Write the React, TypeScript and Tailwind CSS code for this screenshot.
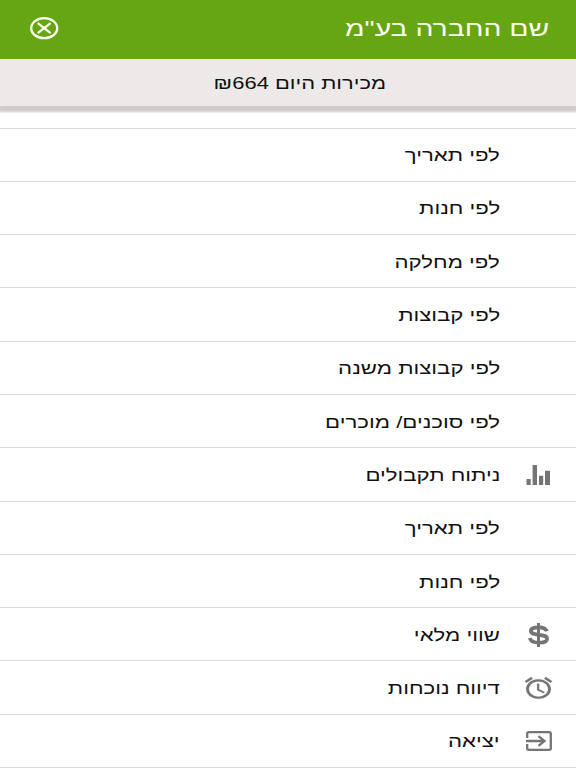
import type { ReactNode } from "react";

interface MenuItem {
  id: string;
  label: string;
  icon?: ReactNode;
}

const MENU_ITEMS: MenuItem[] = [
  { id: "date", label: "לפי תאריך" },
  { id: "store", label: "לפי חנות" },
  { id: "department", label: "לפי מחלקה" },
  { id: "groups", label: "לפי קבוצות" },
  { id: "subgroups", label: "לפי קבוצות משנה" },
  { id: "agents", label: "לפי סוכנים/ מוכרים" },
  { id: "receipts", label: "ניתוח תקבולים", icon: <BarsIcon /> },
  { id: "receipts-date", label: "לפי תאריך" },
  { id: "receipts-store", label: "לפי חנות" },
  { id: "stock", label: "שווי מלאי", icon: <DollarIcon /> },
  { id: "attendance", label: "דיווח נוכחות", icon: <AlarmIcon /> },
  { id: "exit", label: "יציאה", icon: <ExitIcon /> },
];

export default function App() {
  return (
    <div
      dir="rtl"
      className="flex h-screen w-full flex-col overflow-hidden bg-white font-['Liberation_Sans',sans-serif] text-[#111111]"
    >
      {/* Header */}
      <header className="flex h-[59px] shrink-0 items-center justify-between bg-[#65a612] pr-[27px] pb-px pl-[30px] text-[#fcfff0]">
        <h1 className="origin-right scale-x-[1.29] text-[22px] leading-[30px] whitespace-nowrap">
          שם החברה בע"מ
        </h1>
        <button aria-label="סגירה">
          <CloseIcon />
        </button>
      </header>

      {/* Today's sales */}
      <div className="flex h-[47px] shrink-0 items-center justify-center bg-[#ece9e8] pt-[3px] pl-6 shadow-[0_5px_2px_1px_#cecbca]">
        <p className="scale-x-[1.29] text-[17px] leading-6 whitespace-nowrap">
          מכירות היום ₪664
        </p>
      </div>

      {/* Menu */}
      <ul className="mt-[21.5px] border-t border-[#dcdcdc]">
        {MENU_ITEMS.map((item) => (
          <MenuRow key={item.id} item={item} />
        ))}
      </ul>
    </div>
  );
}

function MenuRow({ item }: { item: MenuItem }) {
  return (
    <li className="flex h-[53.3px] items-center border-b border-[#dcdcdc] pt-px pr-[23px]">
      <span className="flex w-[29px] shrink-0 justify-center text-[#757575]">
        {item.icon}
      </span>
      <span className="mr-6 origin-right scale-x-[1.305] pt-0.5 text-[17px] leading-6 whitespace-nowrap">
        {item.label}
      </span>
    </li>
  );
}

function CloseIcon() {
  return (
    <svg
      className="mb-px h-[23px] w-[29px]"
      viewBox="0 0 29 23"
      fill="none"
      stroke="currentColor"
      strokeWidth="2.3"
    >
      <ellipse cx="14.2" cy="11.2" rx="13" ry="10" />
      <path d="M7.8 6.2l12.8 10M20.6 6.2l-12.8 10" />
    </svg>
  );
}

function BarsIcon() {
  return (
    <svg
      className="h-5 w-[25px] shrink-0"
      viewBox="0 0 25 20"
      fill="currentColor"
    >
      <path d="M.5 14h4.2v6H.5zM6.6 0h4.4v20H6.6zM13 10.8h4.2V20H13zM19 5.7h5V20h-5z" />
    </svg>
  );
}

function DollarIcon() {
  return (
    <svg
      className="h-6 w-6 shrink-0"
      viewBox="0 0 24 24"
      fill="none"
      stroke="currentColor"
    >
      <path
        strokeWidth="3.8"
        d="M19.8 8.2C19 5.6 16 4.300 11.500 4.300c-4.600 0-7.600 1.400-7.600 3.700 0 5.500 16.200 2 16.200 7.700 0 2.700-3.600 4-8.300 4-5 0-8.300-1.500-8.900-4.700"
      />
      <path strokeWidth="3" d="M11.5 0v24" />
    </svg>
  );
}

function AlarmIcon() {
  return (
    <svg
      className="h-[26px] w-[33px] shrink-0"
      viewBox="0 0 24 24"
      preserveAspectRatio="none"
      fill="currentColor"
      stroke="currentColor"
      strokeWidth="0.2"
    >
      <path d="M22 5.720l-4.600-3.860-1.290 1.530 4.600 3.860L22 5.720zM7.880 3.390L6.600 1.860 2 5.710l1.290 1.530 4.590-3.850zM12.500 8H11v6l4.750 2.850.75-1.230-4-2.370V8zM12 4c-4.970 0-9 4.030-9 9s4.020 9 9 9a9 9 0 0 0 0-18zm0 16c-3.870 0-7-3.130-7-7s3.130-7 7-7 7 3.130 7 7-3.130 7-7 7z" />
    </svg>
  );
}

function ExitIcon() {
  return (
    <svg
      className="h-5 w-[26px] shrink-0"
      viewBox="0 0 26 20"
      fill="none"
      stroke="currentColor"
      strokeWidth="2.3"
    >
      <path d="M1.200 7V2.700Q1.200 1.200 2.800 1.200h20.400q1.600 0 1.600 1.500v14.600q0 1.500-1.600 1.500H2.800q-1.600 0-1.600-1.500V13" />
      <path d="M0 10h17.500M12.500 5.200l6 4.800-6 4.800" />
    </svg>
  );
}
